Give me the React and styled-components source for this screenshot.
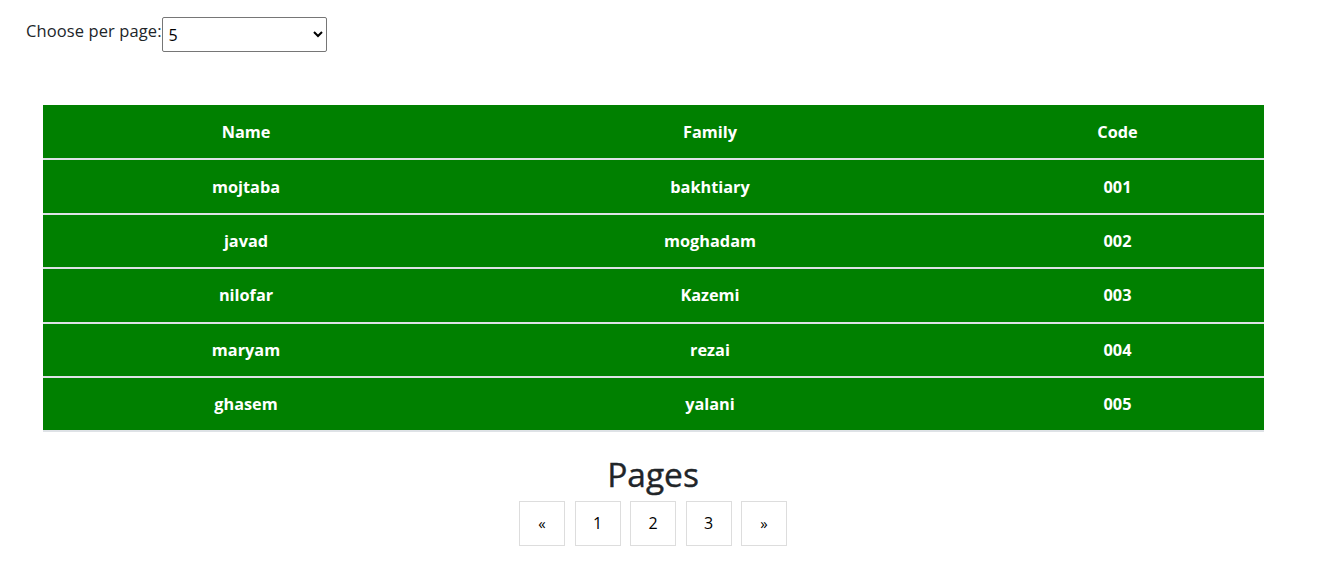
import React, { useState } from 'react';
import styled, { createGlobalStyle } from 'styled-components';

const GlobalStyle = createGlobalStyle`
  body {
    margin: 0;
    font-family: "Open Sans", "Noto Sans", sans-serif;
    color: #212529;
    background: #fff;
  }
`;

const Page = styled.div`
  padding: 17px 58px 0 26px;
`;

const PerPage = styled.label`
  display: flex;
  align-items: flex-start;
  font-size: 16.5px;
  color: #212529;
  span {
    margin-top: 2px;
    letter-spacing: 0.1px;
  }
`;

const Select = styled.select`
  width: 165px;
  height: 35px;
  font-family: "Open Sans", "Noto Sans", sans-serif;
  font-size: 16px;
  border: 1px solid #767676;
  border-radius: 2px;
  background: #fff;
  color: #000;
  padding: 0 2px;
`;

const Table = styled.table`
  width: 1221px;
  margin: 53px 0 0 17px;
  border-collapse: collapse;
  table-layout: fixed;
  background: green;
  color: #fff;
  font-weight: 700;
  font-size: 16.3px;
  border-bottom: 2px solid #dee2e6;
`;

const Row = styled.tr`
  height: 54.4px;
  & + & {
    border-top: 2px solid #dee2e6;
  }
`;

const Cell = styled.td`
  width: ${(p) => p.w}px;
  text-align: center;
  vertical-align: middle;
  padding: 0;
`;

const Pages = styled.div`
  display: flex;
  flex-direction: column;
  align-items: center;
  margin-left: -26px;
  margin-right: -42px;
`;

const Title = styled.h2`
  margin: 22px 0 6px;
  font-size: 33.5px;
  font-weight: 500;
  line-height: 1.2;
  color: #212529;
  -webkit-text-stroke: 0.4px #212529;
`;

const Pager = styled.ul`
  display: flex;
  gap: 9.5px;
  list-style: none;
  margin: 0;
  padding: 0;
`;

const PageBtn = styled.li`
  width: 44px;
  height: 43px;
  border: 1px solid #ddd;
  display: flex;
  align-items: center;
  justify-content: center;
  font-size: ${(p) => (p.$arrow ? '15px' : '16px')};
  color: #000;
  cursor: pointer;
`;

const people = [
  ['mojtaba', 'bakhtiary', '001'],
  ['javad', 'moghadam', '002'],
  ['nilofar', 'Kazemi', '003'],
  ['maryam', 'rezai', '004'],
  ['ghasem', 'yalani', '005'],
];

const widths = [406, 522, 293];

export default function App() {
  const [perPage, setPerPage] = useState('5');
  return (
    <Page>
      <GlobalStyle />
      <PerPage>
        <span>Choose per page:</span>
        <Select value={perPage} onChange={(e) => setPerPage(e.target.value)}>
          <option>5</option>
          <option>10</option>
          <option>15</option>
        </Select>
      </PerPage>
      <Table>
        <tbody>
          <Row>
            {['Name', 'Family', 'Code'].map((h, i) => (
              <Cell key={h} w={widths[i]}>{h}</Cell>
            ))}
          </Row>
          {people.map((p) => (
            <Row key={p[2]}>
              {p.map((v, i) => (
                <Cell key={i} w={widths[i]}>{v}</Cell>
              ))}
            </Row>
          ))}
        </tbody>
      </Table>
      <Pages>
        <Title>Pages</Title>
        <Pager>
          <PageBtn $arrow>«</PageBtn>
          <PageBtn>1</PageBtn>
          <PageBtn>2</PageBtn>
          <PageBtn>3</PageBtn>
          <PageBtn $arrow>»</PageBtn>
        </Pager>
      </Pages>
    </Page>
  );
}
